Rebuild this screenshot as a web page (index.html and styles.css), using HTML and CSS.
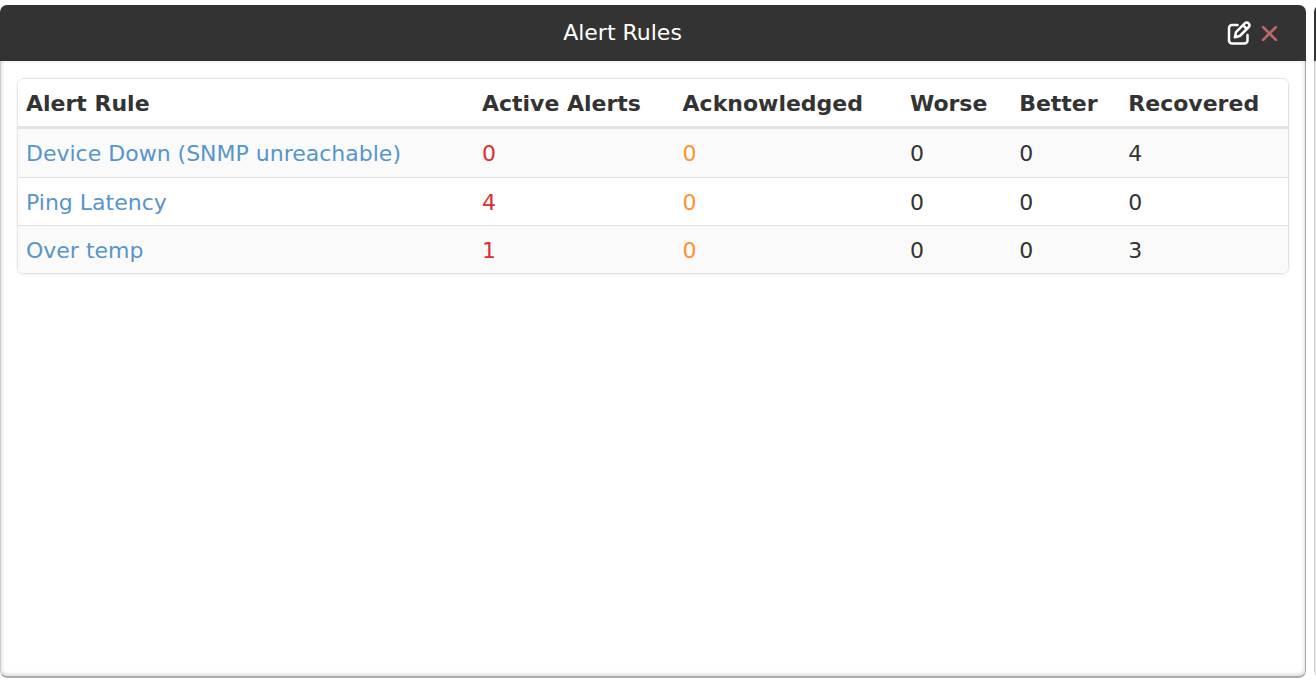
FILE: index.html
```html
<!DOCTYPE html>
<html lang="en">
<head>
<meta charset="utf-8">
<title>Alert Rules</title>
<link rel="stylesheet" href="styles.css">
</head>
<body>
<main class="board">
  <section class="widget">
    <header class="widget-header">
      <h1 class="widget-title">Alert Rules</h1>
      <div class="widget-actions">
        <button class="icon-button" type="button" aria-label="Edit widget">
          <svg class="edit-icon" viewBox="0 0 24 24" aria-hidden="true">
            <path d="M10.500 4H5A3 3 0 0 0 2 7v12.500a3 3 0 0 0 3 3h12.500a3 3 0 0 0 3-3V14"/>
            <path d="M7.800 16.200l1.200-5L18 2.200a2.300 2.300 0 0 1 3.300 0l.5.5a2.300 2.300 0 0 1 0 3.300L12.800 15zM16 4.200l3.800 3.800"/>
          </svg>
        </button>
        <button class="icon-button" type="button" aria-label="Remove widget">
          <svg class="close-icon" viewBox="0 0 16 16" aria-hidden="true"><path d="M2 2l12 12M14 2L2 14"/></svg>
        </button>
      </div>
    </header>
    <div class="widget-body">
      <div class="table-box">
        <table class="rules">
          <colgroup>
            <col class="col-rule"><col class="col-active"><col class="col-ack"><col class="col-worse"><col class="col-better"><col>
          </colgroup>
          <thead>
            <tr><th scope="col">Alert Rule</th><th scope="col">Active Alerts</th><th scope="col">Acknowledged</th><th scope="col">Worse</th><th scope="col">Better</th><th scope="col">Recovered</th></tr>
          </thead>
          <tbody>
            <tr><td><a href="#device-down">Device Down (SNMP unreachable)</a></td><td class="active">0</td><td class="ack">0</td><td>0</td><td>0</td><td>4</td></tr>
            <tr><td><a href="#ping-latency">Ping Latency</a></td><td class="active">4</td><td class="ack">0</td><td>0</td><td>0</td><td>0</td></tr>
            <tr><td><a href="#over-temp">Over temp</a></td><td class="active">1</td><td class="ack">0</td><td>0</td><td>0</td><td>3</td></tr>
          </tbody>
        </table>
      </div>
    </div>
  </section>
  <section class="widget">
    <div class="widget-header"></div>
    <div class="widget-body"></div>
  </section>
</main>
</body>
</html>
```
FILE: styles.css
```css
* {
  box-sizing: border-box;
}

body {
  margin: 0;
  background: #fff;
  color: #333;
  font: 22px/32px Verdana, "DejaVu Sans", sans-serif;
}

.board {
  display: grid;
  grid-template-columns: calc(100% - 10px) 100%;
  gap: 8px;
  height: 100vh;
  padding: 5px 0 2px;
  overflow: hidden;
}

.widget {
  display: flex;
  flex-direction: column;
  border-radius: 7px;
  overflow: hidden;
}

.widget-header {
  display: flex;
  align-items: center;
  height: 56px;
  padding: 0 28px 0 18px;
  background: #333;
  color: #fff;
}

.widget-title {
  flex: 1;
  margin: 0;
  font-size: 22px;
  font-weight: 400;
  text-align: center;
}

.widget-actions {
  display: flex;
  align-items: center;
  gap: 10px;
}

.icon-button {
  display: flex;
  padding: 0;
  border: 0;
  background: none;
  cursor: pointer;
}

.icon-button svg {
  fill: none;
  stroke-linecap: round;
  stroke-linejoin: round;
}

.edit-icon {
  width: 24px;
  height: 24px;
  stroke: #fff;
  stroke-width: 2.5;
}

.close-icon {
  width: 17px;
  height: 17px;
  stroke: #bd6868;
  stroke-width: 2.5;
}

.widget-body {
  flex: 1;
  padding: 17px 16px;
  border: solid #aaa;
  border-width: 0 1px 2px;
  border-left-color: #ccc;
  border-radius: 0 0 7px 7px;
  box-shadow: inset 0 -1px 4px #ccc;
  clip-path: inset(0);
}

.table-box {
  border: 1px solid #e3e3e3;
  border-radius: 7px;
  box-shadow: 0 1px 3px #eee;
  overflow: hidden;
}

.rules {
  width: 100%;
  table-layout: fixed;
  border-collapse: separate;
  border-spacing: 0;
  background: #fff;
}

.col-rule { width: 35.9%; }
.col-active { width: 15.8%; }
.col-ack { width: 17.9%; }
.col-worse { width: 8.6%; }
.col-better { width: 8.6%; }

.rules th,
.rules td {
  height: 48px;
  padding: 2px 8px 0;
  text-align: left;
  white-space: nowrap;
}

.rules th {
  height: 50px;
  border-bottom: 3px solid #e3e3e3;
}

.rules tr + tr td {
  border-top: 1px solid #e0e0e0;
}

.rules tbody tr:nth-child(odd) {
  background: #fafafa;
}

.rules a {
  color: #5795ca;
  text-decoration: none;
}

.rules .active { color: #d9302f; }
.rules .ack { color: #ff9130; }
```
